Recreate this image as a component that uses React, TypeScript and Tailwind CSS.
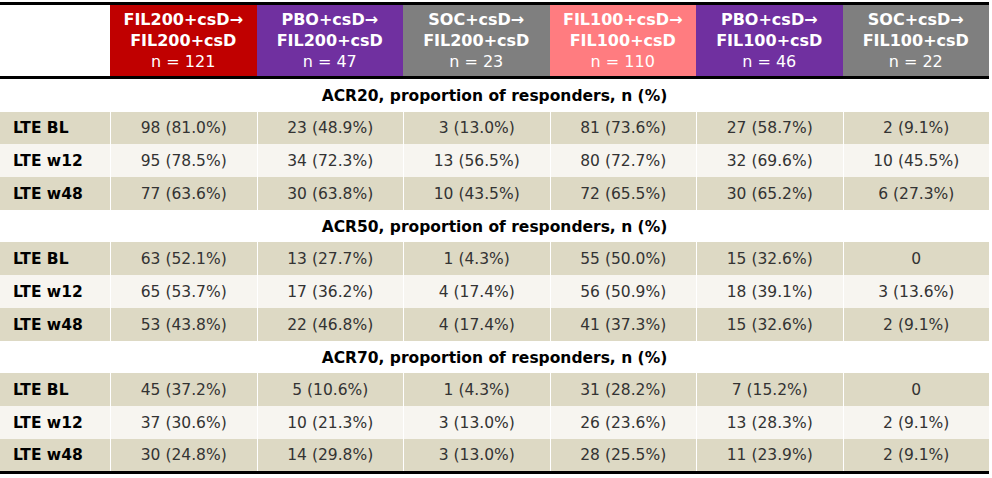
const groups = [
  { from: "FIL200+csD→", to: "FIL200+csD", n: 121, bg: "bg-[#c00000]" },
  { from: "PBO+csD→", to: "FIL200+csD", n: 47, bg: "bg-[#7030a0]" },
  { from: "SOC+csD→", to: "FIL200+csD", n: 23, bg: "bg-[#7f7f7f]" },
  { from: "FIL100+csD→", to: "FIL100+csD", n: 110, bg: "bg-[#ff7c80]" },
  { from: "PBO+csD→", to: "FIL100+csD", n: 46, bg: "bg-[#7030a0]" },
  { from: "SOC+csD→", to: "FIL100+csD", n: 22, bg: "bg-[#7f7f7f]" },
]

const sections = [
  {
    title: "ACR20, proportion of responders, n (%)",
    rows: [
      ["LTE BL", "98 (81.0%)", "23 (48.9%)", "3 (13.0%)", "81 (73.6%)", "27 (58.7%)", "2 (9.1%)"],
      ["LTE w12", "95 (78.5%)", "34 (72.3%)", "13 (56.5%)", "80 (72.7%)", "32 (69.6%)", "10 (45.5%)"],
      ["LTE w48", "77 (63.6%)", "30 (63.8%)", "10 (43.5%)", "72 (65.5%)", "30 (65.2%)", "6 (27.3%)"],
    ],
  },
  {
    title: "ACR50, proportion of responders, n (%)",
    rows: [
      ["LTE BL", "63 (52.1%)", "13 (27.7%)", "1 (4.3%)", "55 (50.0%)", "15 (32.6%)", "0"],
      ["LTE w12", "65 (53.7%)", "17 (36.2%)", "4 (17.4%)", "56 (50.9%)", "18 (39.1%)", "3 (13.6%)"],
      ["LTE w48", "53 (43.8%)", "22 (46.8%)", "4 (17.4%)", "41 (37.3%)", "15 (32.6%)", "2 (9.1%)"],
    ],
  },
  {
    title: "ACR70, proportion of responders, n (%)",
    rows: [
      ["LTE BL", "45 (37.2%)", "5 (10.6%)", "1 (4.3%)", "31 (28.2%)", "7 (15.2%)", "0"],
      ["LTE w12", "37 (30.6%)", "10 (21.3%)", "3 (13.0%)", "26 (23.6%)", "13 (28.3%)", "2 (9.1%)"],
      ["LTE w48", "30 (24.8%)", "14 (29.8%)", "3 (13.0%)", "28 (25.5%)", "11 (23.9%)", "2 (9.1%)"],
    ],
  },
]

const cols = "grid grid-cols-[110px_repeat(6,1fr)]"

export default function App() {
  return (
    <div className="w-[992px] h-[478px] bg-white pt-[2px] font-['DejaVu_Sans',Verdana,sans-serif] text-[15.5px]">
      <div className="w-[989px] border-t-[3px] border-b-[3px] border-black">
        <div className={`${cols} h-[74px] border-b-[3px] border-black`}>
          <div className="bg-white" />
          {groups.map((g, i) => (
            <div
              key={i}
              className={`${g.bg} flex flex-col items-center justify-center pb-[1px] text-white text-[16px] leading-[21px]`}
            >
              <span className="font-bold">{g.from}</span>
              <span className="font-bold">{g.to}</span>
              <span>n = {g.n}</span>
            </div>
          ))}
        </div>
        {sections.map((s) => (
          <div key={s.title}>
            <div className="h-[32.7px] flex items-center justify-center pt-[3px] font-bold text-black">
              {s.title}
            </div>
            {s.rows.map((r, ri) => (
              <div
                key={ri}
                className={`${cols} h-[32.7px] ${ri === 1 ? "bg-[#f7f5f0]" : "bg-[#ddd9c4]"}`}
              >
                {r.map((c, ci) =>
                  ci === 0 ? (
                    <div key={ci} className="flex items-center pt-[2px] pl-[13px] font-bold text-black">
                      {c}
                    </div>
                  ) : (
                    <div
                      key={ci}
                      className="flex items-center justify-center pt-[2px] border-l border-white text-[#333333]"
                    >
                      {c}
                    </div>
                  )
                )}
              </div>
            ))}
          </div>
        ))}
      </div>
    </div>
  )
}
